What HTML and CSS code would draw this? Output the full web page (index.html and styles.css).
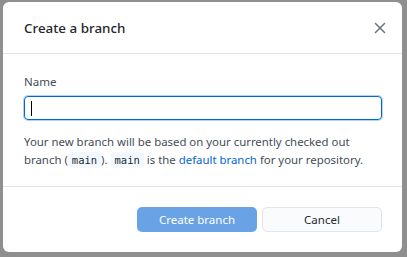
FILE: index.html
```html
<!DOCTYPE html>
<html>
<head>
<meta charset="utf-8">
<link rel="stylesheet" href="styles.css">
</head>
<body>
<div class="backdrop">
  <div class="dialog">
    <header class="dialog-header">
      <h1 class="title">Create a branch</h1>
      <button class="close" aria-label="Close">
        <svg width="12" height="12" viewBox="0 0 12 12"><path d="M1.5 1.5L10.5 10.5M10.5 1.5L1.5 10.5" stroke="#6a737d" stroke-width="1.5" stroke-linecap="round"/></svg>
      </button>
    </header>
    <div class="dialog-body">
      <label class="label">Name</label>
      <div class="input"><span class="caret"></span></div>
      <p class="desc">Your new branch will be based on your currently checked out branch (<code>main</code>). <code>main</code> is the <a class="link">default branch</a> for your repository.</p>
    </div>
    <footer class="dialog-footer">
      <button class="btn primary">Create branch</button>
      <button class="btn secondary">Cancel</button>
    </footer>
  </div>
</div>
</body>
</html>
```
FILE: styles.css
```css
html, body { margin: 0; padding: 0; }
body {
  width: 407px; height: 257px; overflow: hidden;
  background: #8f8f8f;
  font-family: "Noto Sans", "Open Sans", sans-serif;
  color: #24292e;
}
.backdrop { padding: 2px 5px 0 3px; }
.dialog {
  width: 399px; height: 250px;
  background: #fff;
  border-radius: 6px;
  box-sizing: border-box;
  display: flex; flex-direction: column;
}
.dialog-header {
  height: 51px;
  border-bottom: 1px solid #e1e4e8;
  display: flex; align-items: center; justify-content: space-between;
  padding: 0 14px 0 21px;
}
.title { margin: 0; font-size: 13.4px; font-weight: 500; color: #24292e; }
.close { border: 0; background: none; padding: 0; width: 16px; height: 16px; display: flex; align-items: center; justify-content: center; }
.dialog-body {
  padding: 20px 20px 0 21px;
  height: 133px; box-sizing: border-box;
  border-bottom: 1px solid #e1e4e8;
}
.label { display: block; font-size: 11.5px; color: #444d56; line-height: 16px; }
.input {
  margin-top: 6px;
  height: 24px; box-sizing: border-box;
  border: 1px solid #0366d6;
  border-radius: 4px;
  box-shadow: 0 0 0 1px rgba(3,102,214,0.3);
  display: flex; align-items: center; padding-left: 6px;
}
.caret { width: 1px; height: 15px; background: #000; }
.desc { margin: 13px 0 0; font-size: 11.4px; line-height: 18px; color: #444d56; }
code {
  font-family: "DejaVu Sans Mono", monospace; font-size: 10.5px;
  background: #f1f8ff; border-radius: 4px; padding: 2px 4px;
  color: #24292e;
}
.link { color: #0366d6; }
.dialog-footer {
  flex: 1;
  display: flex; justify-content: flex-end; align-items: flex-start; gap: 5px;
  padding: 20px 20px 0 0;
}
.btn {
  width: 120px; height: 25px; border-radius: 5px;
  font-family: inherit; font-size: 11.5px; padding: 0;
}
.primary { background: #6aa2e6; border: 0; color: #fff; }
.secondary { background: #fafbfc; border: 1px solid #e1e4e8; color: #24292e; }
```
